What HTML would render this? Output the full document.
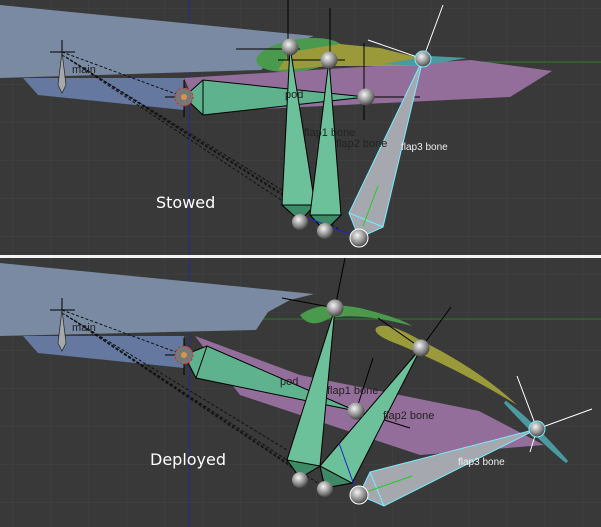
<!DOCTYPE html>
<html><head><style>
body{margin:0;background:#393939;}
svg{display:block}
text{font-family:"Liberation Sans",sans-serif}
</style></head><body>
<svg width="601" height="527" viewBox="0 0 601 527" xmlns="http://www.w3.org/2000/svg">
<defs>
<radialGradient id="ball" cx="0.4" cy="0.35" r="0.7">
<stop offset="0" stop-color="#f4f4f4"/><stop offset="0.6" stop-color="#8a8a8a"/><stop offset="1" stop-color="#3a3a3a"/>
</radialGradient>
<pattern id="grid" width="38" height="38" patternUnits="userSpaceOnUse" x="12" y="8">
<path d="M0 0H38M0 0V38" stroke="#434343" stroke-width="1" fill="none"/>
</pattern>
</defs>
<rect width="601" height="527" fill="#393939"/>
<rect width="601" height="527" fill="url(#grid)"/>

<g>
<line x1="440" y1="62" x2="601" y2="62" stroke="#2f7a2f"/>
<line x1="189.5" y1="0" x2="189.5" y2="258" stroke="#2a2a8a"/>
<polygon points="0,5 314,36 290,45 261,70 0,78" fill="#7a8aa2"/>
<polygon points="23,78 184,78 184,110 38,95" fill="#6478a0"/>
<polygon points="184,78 471,60 552,71 510,97 199,112" fill="#946e9a"/>
<ellipse cx="300" cy="55" rx="44" ry="16" fill="#4a9a4e" transform="rotate(-8 300 55)"/>
<polygon points="278,70 290,52 340,44 380,48 420,58 420,66 330,66" fill="#9a9a3a"/>
<polygon points="383,64 430,56 467,58 420,66" fill="#4a9aa0"/>
<g stroke="#111" stroke-dasharray="3,2" fill="none" stroke-width="1">
<line x1="62" y1="52" x2="184" y2="97"/>
<line x1="62" y1="55" x2="282" y2="190"/>
<line x1="66" y1="57" x2="290" y2="200"/>
<line x1="70" y1="60" x2="296" y2="210"/>
<line x1="74" y1="62" x2="340" y2="230"/>
</g>
<line x1="62" y1="40" x2="62" y2="93" stroke="#000"/>
<line x1="50" y1="52" x2="75" y2="52" stroke="#000"/>
<polygon points="62,52 66,85 62,93 58,85" fill="#a8a8a8" stroke="#222" stroke-width="0.7"/>
<g stroke="#000" stroke-width="1">
<line x1="288" y1="0" x2="288" y2="60"/><line x1="236" y1="49" x2="300" y2="49"/>
<line x1="330" y1="8" x2="330" y2="70"/><line x1="278" y1="60" x2="345" y2="60"/>
<line x1="364" y1="43" x2="364" y2="120"/><line x1="340" y1="97" x2="420" y2="97"/>
<line x1="165" y1="97" x2="203" y2="97"/><line x1="184" y1="80" x2="184" y2="117"/>
</g>
<line x1="423" y1="59" x2="443" y2="5" stroke="#fff"/>
<line x1="423" y1="59" x2="368" y2="40" stroke="#fff"/>
<polygon points="184,97 203,80 366,97 203,115" fill="#5fb28e" stroke="#000" stroke-width="1"/>
<line x1="203" y1="80" x2="203" y2="115" stroke="#000"/>
<polygon points="290,47 315,205 300,221 282,205" fill="#6cc09a" stroke="#000"/>
<polygon points="282,205 315,205 300,221" fill="#3e8a66" stroke="#000"/>
<polygon points="329,60 341,215 325,231 310,215" fill="#6cc09a" stroke="#000"/>
<polygon points="310,215 341,215 325,231" fill="#3e8a66" stroke="#000"/>
<polygon points="423,59 383,227 359,238 349,213" fill="#a5a8ae" stroke="#7ef" stroke-width="1"/>
<line x1="349" y1="213" x2="383" y2="227" stroke="#7ef"/>
<line x1="363" y1="226" x2="378" y2="186" stroke="#2c2"/>
<line x1="308" y1="218" x2="352" y2="235" stroke="#22c"/>
<circle cx="290" cy="47" r="8.5" fill="url(#ball)"/><circle cx="329" cy="60" r="8.5" fill="url(#ball)"/>
<circle cx="366" cy="97" r="8.5" fill="url(#ball)"/>
<circle cx="300" cy="222" r="8" fill="url(#ball)"/><circle cx="325" cy="231" r="8" fill="url(#ball)"/>
<circle cx="359" cy="238" r="9" fill="url(#ball)" stroke="#fff"/>
<circle cx="423" cy="59" r="8" fill="url(#ball)" stroke="#7ef"/>
<circle cx="184" cy="97" r="9" fill="#777" stroke="#d22" stroke-dasharray="2,2"/>
<circle cx="184" cy="97" r="3" fill="#d8954a"/>
<text x="72" y="73" font-size="11" fill="#222">main</text>
<text x="285" y="98" font-size="11" fill="#222">pod</text>
<text x="304" y="136" font-size="11" fill="#222">flap1 bone</text>
<text x="336" y="147" font-size="11" fill="#222">flap2 bone</text>
<text x="401" y="150" font-size="10" fill="#eee">flap3 bone</text>
<text x="156" y="208" font-size="16" fill="#fff" style="font-family:'DejaVu Sans',sans-serif">Stowed</text>
</g>

<rect x="0" y="255" width="601" height="3" fill="#f4f4f4"/>

<g>
<line x1="258" y1="319" x2="601" y2="319" stroke="#2f7a2f"/>
<line x1="189.5" y1="258" x2="189.5" y2="527" stroke="#2a2a8a"/>
<polygon points="0,263 314,294 290,300 268,312 256,330 0,336" fill="#7a8aa2"/>
<polygon points="23,336 184,336 184,368 38,353" fill="#6478a0"/>
<polygon points="195,336 300,375 479,411 544,445 420,455 240,395" fill="#946e9a"/>
<path d="M300,315 Q320,300 360,308 Q400,318 412,326 Q360,312 330,318 Q310,330 300,315Z" fill="#4a9a4e"/>
<path d="M376,328 Q385,320 420,340 Q480,370 517,405 Q460,370 400,345 Q372,335 376,328Z" fill="#9a9a3a"/>
<path d="M505,402 Q530,420 567,462 Q540,440 505,402Z" fill="#4a9aa0" stroke="#4a9aa0" stroke-width="3"/>
<g stroke="#111" stroke-dasharray="3,2" fill="none">
<line x1="62" y1="310" x2="184" y2="355"/>
<line x1="62" y1="313" x2="287" y2="450"/>
<line x1="66" y1="315" x2="290" y2="462"/>
<line x1="70" y1="318" x2="296" y2="470"/>
<line x1="74" y1="320" x2="325" y2="488"/>
</g>
<line x1="62" y1="298" x2="62" y2="351" stroke="#000"/>
<line x1="50" y1="310" x2="75" y2="310" stroke="#000"/>
<polygon points="62,310 66,343 62,351 58,343" fill="#a8a8a8" stroke="#222" stroke-width="0.7"/>
<g stroke="#000">
<line x1="335" y1="308" x2="345" y2="258"/><line x1="282" y1="298" x2="335" y2="308"/>
<line x1="421" y1="348" x2="451" y2="307"/><line x1="378" y1="318" x2="421" y2="348"/>
<line x1="356" y1="411" x2="373" y2="358"/><line x1="330" y1="403" x2="410" y2="428"/>
<line x1="165" y1="355" x2="203" y2="355"/><line x1="184" y1="338" x2="184" y2="375"/>
</g>
<line x1="537" y1="429" x2="517" y2="376" stroke="#fff"/>
<line x1="537" y1="429" x2="592" y2="409" stroke="#fff"/>
<line x1="537" y1="429" x2="530" y2="452" stroke="#fff"/>
<polygon points="184,355 207,346 356,411 196,378" fill="#5fb28e" stroke="#000"/>
<line x1="207" y1="346" x2="196" y2="378" stroke="#000"/>
<polygon points="335,308 320,466 300,478 287,460" fill="#6cc09a" stroke="#000"/>
<polygon points="287,460 320,466 300,478" fill="#3e8a66" stroke="#000"/>
<polygon points="421,348 352,483 325,488 320,466" fill="#6cc09a" stroke="#000"/>
<polygon points="320,466 352,483 325,488" fill="#3e8a66" stroke="#000"/>
<polygon points="537,429 384,506 359,495 370,472" fill="#a5a8ae" stroke="#7ef"/>
<line x1="370" y1="472" x2="384" y2="506" stroke="#7ef"/>
<line x1="369" y1="491" x2="412" y2="476" stroke="#2c2"/>
<line x1="339" y1="443" x2="354" y2="485" stroke="#22c"/>
<circle cx="335" cy="308" r="8.5" fill="url(#ball)"/><circle cx="421" cy="348" r="8.5" fill="url(#ball)"/>
<circle cx="356" cy="411" r="8.5" fill="url(#ball)"/>
<circle cx="300" cy="480" r="8" fill="url(#ball)"/><circle cx="325" cy="489" r="8" fill="url(#ball)"/>
<circle cx="359" cy="495" r="9" fill="url(#ball)" stroke="#fff"/>
<circle cx="537" cy="429" r="8" fill="url(#ball)" stroke="#7ef"/>
<circle cx="184" cy="355" r="9" fill="#777" stroke="#d22" stroke-dasharray="2,2"/>
<circle cx="184" cy="355" r="3" fill="#d8954a"/>
<text x="72" y="331" font-size="11" fill="#222">main</text>
<text x="280" y="385" font-size="11" fill="#222">pod</text>
<text x="327" y="394" font-size="11" fill="#222">flap1 bone</text>
<text x="383" y="419" font-size="11" fill="#222">flap2 bone</text>
<text x="458" y="465" font-size="10" fill="#eee">flap3 bone</text>
<text x="150" y="465" font-size="16" fill="#fff" style="font-family:'DejaVu Sans',sans-serif">Deployed</text>
</g>
</svg>
</body></html>
